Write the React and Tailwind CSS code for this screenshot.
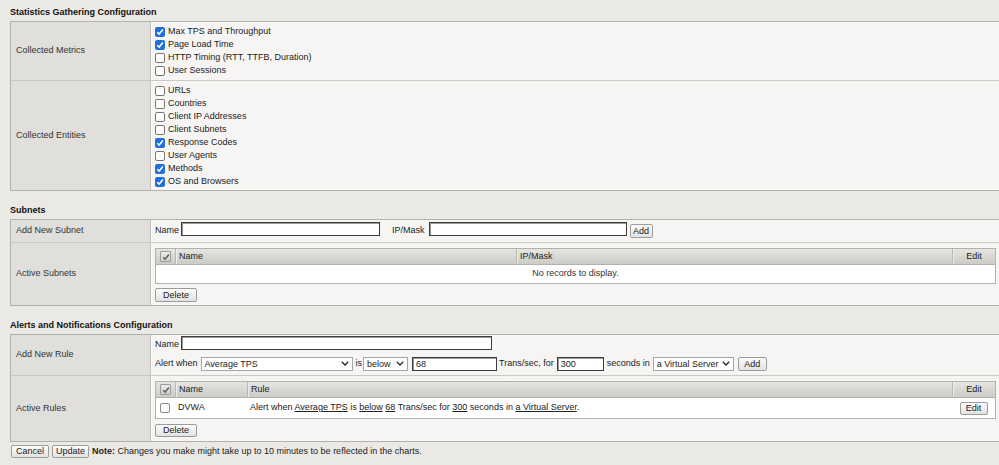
import React from "react";

const font = "font-['Liberation_Sans',Arial,sans-serif]";

function Check({ on }) {
  if (on) {
    return (
      <span className="inline-flex items-center justify-center w-[10px] h-[10px] rounded-[2px] bg-[#1f6fdc] shrink-0">
        <svg width="8" height="8" viewBox="0 0 8 8">
          <path d="M1.2 4.2 L3.2 6.1 L6.9 1.6" fill="none" stroke="#fff" strokeWidth="1.5" />
        </svg>
      </span>
    );
  }
  return <span className="inline-block w-[10px] h-[10px] rounded-[2px] bg-white border border-[#767676] shrink-0" />;
}

function GreyCheck() {
  return (
    <span className="inline-flex items-center justify-center w-[11px] h-[11px] rounded-[1px] border border-[#9a9a9a] bg-linear-to-b from-[#ececec] to-[#cfcfcf]">
      <svg width="8" height="8" viewBox="0 0 8 8">
        <path d="M1.2 4.2 L3.2 6.1 L6.9 1.6" fill="none" stroke="#5f5f5f" strokeWidth="1.5" />
      </svg>
    </span>
  );
}

function Item({ on, children }) {
  return (
    <div className="flex items-center h-[13px] gap-[3px]">
      <Check on={on} />
      <span className="leading-[13px]">{children}</span>
    </div>
  );
}

function Input({ w, value }) {
  return (
    <span
      className="inline-block h-[14px] bg-white border border-[#3c3c3c] shadow-[inset_1px_1px_0_#9a9a9a] px-[3px] leading-[12px] text-[#222]"
      style={{ width: w }}
    >
      {value}
    </span>
  );
}

function Select({ w, value }) {
  return (
    <span
      className="inline-flex items-center justify-between h-[14px] bg-white border border-[#a5a5a5] pl-[3px] pr-[3px] leading-[12px]"
      style={{ width: w }}
    >
      <span>{value}</span>
      <svg width="8" height="5" viewBox="0 0 8 5">
        <path d="M0.8 0.8 L4 4 L7.2 0.8" fill="none" stroke="#222" strokeWidth="1.3" />
      </svg>
    </span>
  );
}

function Btn({ w, children, h = "h-[13px]" }) {
  return (
    <span
      className={`inline-flex items-center justify-center ${h} border border-[#9c9c9c] rounded-[2px] bg-linear-to-b from-[#fdfdfd] to-[#e2e2e2] leading-[11px] text-[#222]`}
      style={{ width: w }}
    >
      {children}
    </span>
  );
}

function Title({ h, children }) {
  return (
    <div className={`${h} flex items-end pb-[3px] font-bold text-[#111] leading-[11px]`}>{children}</div>
  );
}

function Row({ first, label, children, valueClass = "" }) {
  return (
    <div className={`flex ${first ? "" : "border-t border-[#cbc9c5]"}`}>
      <div className="w-[140px] shrink-0 flex items-center pl-[5px] bg-[#e0dfdc] border-r border-[#c2c0bc] text-[#333]">
        {label}
      </div>
      <div className={`flex-1 bg-[#f6f5f3] border-l border-[#fbfbfa] pl-[3px] ${valueClass}`}>{children}</div>
    </div>
  );
}

function Table({ children }) {
  return <div className="border border-[#b3b1ad] border-r-0">{children}</div>;
}

function HeadCell({ className = "", children }) {
  return (
    <div className={`flex items-center h-full border-l border-[#b9b7b2] shadow-[inset_1px_0_0_#efeeeb] ${className}`}>
      {children}
    </div>
  );
}

export default function App() {
  return (
    <div className={`w-[999px] h-[465px] overflow-hidden bg-[#ebe9e5] ${font} text-[9px] text-[#222]`}>
      <div className="w-[1003px] pl-[10px]">
        <Title h="h-[21px]">Statistics Gathering Configuration</Title>
        <Table>
          <Row first label="Collected Metrics" valueClass="pt-[3px] pb-[3px]">
            <Item on>Max TPS and Throughput</Item>
            <Item on>Page Load Time</Item>
            <Item>HTTP Timing (RTT, TTFB, Duration)</Item>
            <Item>User Sessions</Item>
          </Row>
          <Row label="Collected Entities" valueClass="pt-[3px] pb-[2px]">
            <Item>URLs</Item>
            <Item>Countries</Item>
            <Item>Client IP Addresses</Item>
            <Item>Client Subnets</Item>
            <Item on>Response Codes</Item>
            <Item>User Agents</Item>
            <Item on>Methods</Item>
            <Item on>OS and Browsers</Item>
          </Row>
        </Table>

        <Title h="h-[28px]">Subnets</Title>
        <Table>
          <Row first label="Add New Subnet" valueClass="h-[22px] flex items-center">
            <span>Name</span>
            <span className="ml-[2px]"><Input w={199} /></span>
            <span className="ml-[12px]">IP/Mask</span>
            <span className="ml-[4px]"><Input w={198} /></span>
            <span className="ml-[3px]"><Btn w={23} h="h-[14px]">Add</Btn></span>
          </Row>
          <Row label="Active Subnets" valueClass="pt-[5px] pb-[3px]">
            <div className="w-[841px] border border-[#b3b1ad] bg-white">
              <div className="flex h-[16px] bg-linear-to-b from-[#e6e5e1] to-[#cdcbc6] border-b border-[#b3b1ad]">
                <div className="w-[19px] flex items-center pl-[4px]"><GreyCheck /></div>
                <HeadCell className="w-[341px] pl-[3px]">Name</HeadCell>
                <HeadCell className="w-[436px] pl-[3px]">IP/Mask</HeadCell>
                <HeadCell className="flex-1 justify-center">Edit</HeadCell>
              </div>
              <div className="h-[18px] flex items-center justify-center text-[#333]">No records to display.</div>
            </div>
            <div className="mt-[4px]"><Btn w={42} h="h-[14px]">Delete</Btn></div>
          </Row>
        </Table>

        <Title h="h-[28px]">Alerts and Notifications Configuration</Title>
        <Table>
          <Row first label="Add New Rule" valueClass="pt-[3px] pb-[4px]">
            <div className="flex items-center h-[14px]">
              <span>Name</span>
              <span className="ml-[2px]"><Input w={311} /></span>
            </div>
            <div className="flex items-center h-[14px] mt-[5px]">
              <span>Alert when</span>
              <span className="ml-[3px]"><Select w={152} value="Average TPS" /></span>
              <span className="ml-[3px]">is</span>
              <span className="ml-[1px]"><Select w={45} value="below" /></span>
              <span className="ml-[4px]"><Input w={85} value="68" /></span>
              <span className="ml-[2px]">Trans/sec, for</span>
              <span className="ml-[3px]"><Input w={47} value="300" /></span>
              <span className="ml-[3px]">seconds in</span>
              <span className="ml-[3px]"><Select w={81} value="a Virtual Server" /></span>
              <span className="ml-[4px]"><Btn w={29} h="h-[14px]">Add</Btn></span>
            </div>
          </Row>
          <Row label="Active Rules" valueClass="pt-[5px] pb-[3px]">
            <div className="w-[841px] border border-[#b3b1ad] bg-white">
              <div className="flex h-[16px] bg-linear-to-b from-[#e6e5e1] to-[#cdcbc6] border-b border-[#b3b1ad]">
                <div className="w-[19px] flex items-center pl-[4px]"><GreyCheck /></div>
                <HeadCell className="w-[72px] pl-[3px]">Name</HeadCell>
                <HeadCell className="w-[705px] pl-[3px]">Rule</HeadCell>
                <HeadCell className="flex-1 justify-center">Edit</HeadCell>
              </div>
              <div className="h-[20px] flex items-center">
                <div className="w-[19px] flex items-center pl-[4px]">
                  <span className="inline-block w-[10px] h-[10px] rounded-[2px] bg-white border border-[#8a8a8a]" />
                </div>
                <div className="w-[72px] pl-[3px]">DVWA</div>
                <div className="w-[705px] pl-[3px]">
                  Alert when <span className="underline">Average TPS</span> is <span className="underline">below</span>{" "}
                  <span className="underline">68</span> Trans/sec for <span className="underline">300</span> seconds in{" "}
                  <span className="underline">a Virtual Server</span>.
                </div>
                <div className="flex-1 flex justify-center">
                  <Btn w={28}>Edit</Btn>
                </div>
              </div>
            </div>
            <div className="mt-[5px]"><Btn w={42}>Delete</Btn></div>
          </Row>
        </Table>

        <div className="flex items-center mt-[3px] pl-[1px]">
          <Btn w={38}>Cancel</Btn>
          <span className="ml-[3px]"><Btn w={37}>Update</Btn></span>
          <span className="ml-[3px]"><span className="font-bold">Note:</span> Changes you make might take up to 10 minutes to be reflected in the charts.</span>
        </div>
      </div>
    </div>
  );
}
